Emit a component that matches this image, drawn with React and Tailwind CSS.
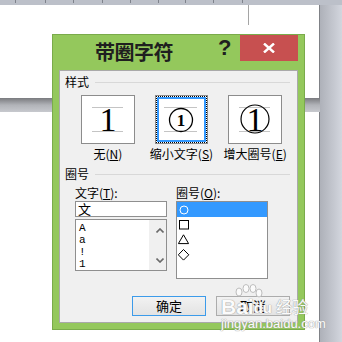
import React from 'react';

const ticks = [15, 45, 73, 102, 130, 158, 185, 213, 242];

const Ruler = () => (
  <svg width="342" height="5" className="block bg-[#bcc0c9]">
    {ticks.map((x) => (
      <line key={x} x1={x + 0.5} y1="0" x2={x + 0.5} y2="3" stroke="#7f838c" strokeWidth="1" />
    ))}
  </svg>
);

// glyph previews inside the three style boxes
const PlainOne = () => (
  <svg width="52" height="47">
    <line x1="10" y1="11.5" x2="41" y2="11.5" stroke="#c4c4c4" />
    <line x1="10" y1="35.5" x2="41" y2="35.5" stroke="#c4c4c4" />
    <text x="26" y="35" textAnchor="middle" fontFamily="Liberation Serif" fontSize="34" fill="#000">1</text>
  </svg>
);

const SmallCircled = () => (
  <svg width="45" height="41">
    <line x1="5" y1="8.5" x2="38" y2="8.5" stroke="#c4c4c4" />
    <line x1="5" y1="32.5" x2="38" y2="32.5" stroke="#c4c4c4" />
    <circle cx="22" cy="21" r="11.5" fill="none" stroke="#000" strokeWidth="1.3" />
    <text x="22" y="27" textAnchor="middle" fontFamily="Liberation Serif" fontSize="17" fontWeight="bold" fill="#000">1</text>
  </svg>
);

const BigCircled = () => (
  <svg width="52" height="47">
    <line x1="10" y1="11.5" x2="41" y2="11.5" stroke="#c4c4c4" />
    <line x1="10" y1="35.5" x2="41" y2="35.5" stroke="#c4c4c4" />
    <circle cx="26" cy="23" r="14" fill="none" stroke="#000" strokeWidth="1.2" />
    <text x="26" y="35" textAnchor="middle" fontFamily="Liberation Serif" fontSize="34" fill="#000">1</text>
  </svg>
);

const Box = ({ children }) => (
  <div className="w-[54px] h-[49px] border border-[#8c8c8c] bg-white">{children}</div>
);

const SectionHead = ({ label }) => (
  <div className="flex items-center">
    <span>{label}</span>
    <div className="flex-1 h-px ml-[6px] mr-[2px] bg-[#d8d8d8]" />
  </div>
);

const Chevron = ({ up }) => (
  <svg width="8" height="5">
    <polyline
      points={up ? '0.5,4.5 4,1 7.5,4.5' : '0.5,0.5 4,4 7.5,0.5'}
      fill="none"
      stroke="#6a6a6a"
      strokeWidth="1.6"
    />
  </svg>
);

const Dialog = () => (
  <div className="absolute left-[52px] top-[34px] w-[253px] h-[296px] border border-[#7aab4b] bg-[#94c85c]">
    {/* title bar */}
    <div className="flex h-[35px]">
      <div className="w-[165px] pl-[42px] pt-[6px] text-[20px] leading-[22px] font-bold text-[#1f1f1f] tracking-[-0.5px]">
        带圈字符
      </div>
      <div className="w-[22px] pt-[2px] font-['Liberation_Sans',sans-serif] text-[22px] leading-none font-bold text-[#1f1f1f]">
        ?
      </div>
      <div className="w-[58px] h-[26px] bg-[#c75050] flex items-center justify-center">
        <svg width="12" height="10">
          <line x1="1" y1="0.5" x2="11" y2="9.5" stroke="#fff" strokeWidth="2.4" />
          <line x1="11" y1="0.5" x2="1" y2="9.5" stroke="#fff" strokeWidth="2.4" />
        </svg>
      </div>
    </div>

    {/* content panel */}
    <div className="ml-[6px] w-[239px] h-[253px] border border-[#a9a9a9] bg-[#f0f0f0] px-[5px] pt-[4px] text-[12px] leading-[14px] text-black">
      <SectionHead label="样式" />

      <div className="flex mt-[6px] ml-[6px]">
        <div className="w-[75px] flex flex-col items-center">
          <Box>
            <PlainOne />
          </Box>
          <span className="mt-[3px]">
            无(<span className="underline">N</span>)
          </span>
        </div>
        <div className="w-[75px] flex flex-col items-center">
          <div className="w-[53px] h-[49px] border border-[#8c8c8c] bg-white">
            <div className="h-full border border-dotted border-black">
              <div className="h-full border-2 border-[#3399ff]">
                <SmallCircled />
              </div>
            </div>
          </div>
          <span className="mt-[3px]">
            缩小文字(<span className="underline">S</span>)
          </span>
        </div>
        <div className="w-[75px] flex flex-col items-center">
          <Box>
            <BigCircled />
          </Box>
          <span className="mt-[3px]">
            增大圈号(<span className="underline">E</span>)
          </span>
        </div>
      </div>

      <div className="mt-[6px]">
        <SectionHead label="圈号" />
      </div>

      <div className="flex mt-[5px] ml-[10px]">
        <div className="w-[92px] flex flex-col">
          <span>
            文字(<span className="underline">T</span>):
          </span>
          <div className="mt-px h-[16px] border border-[#8f8f8f] bg-white pl-[2px] text-[13px] leading-[14px]">
            文
          </div>
          <div className="mt-[2px] h-[52px] border border-[#8f8f8f] bg-white flex">
            <div className="w-[73px] pl-[3px] pt-[2px] font-['Liberation_Mono',monospace] text-[11px] leading-[12px]">
              <div>A</div>
              <div>a</div>
              <div>!</div>
              <div>1</div>
            </div>
            <div className="flex-1 bg-[#f0f0f0] flex flex-col items-center justify-between pt-[8px] pb-[7px] pl-[4px]">
              <Chevron up />
              <Chevron />
            </div>
          </div>
        </div>

        <div className="w-[92px] ml-[9px] flex flex-col">
          <span>
            圈号(<span className="underline">O</span>):
          </span>
          <div className="mt-px h-[78px] border border-[#8f8f8f] bg-white">
            <div className="h-[15px] bg-[#3399ff] flex items-center pl-[2px]">
              <svg width="10" height="10">
                <circle cx="5" cy="5" r="4" fill="none" stroke="#fff" strokeWidth="1" />
              </svg>
            </div>
            <div className="h-[15px] flex items-center pl-[2px]">
              <svg width="10" height="10">
                <rect x="0.5" y="0.5" width="9" height="8.5" fill="none" stroke="#000" strokeWidth="1" />
              </svg>
            </div>
            <div className="h-[15px] flex items-center pl-[1px]">
              <svg width="12" height="11">
                <polygon points="5.5,0.8 10.6,9.6 0.4,9.6" fill="none" stroke="#000" strokeWidth="1" />
              </svg>
            </div>
            <div className="h-[15px] flex items-center pl-[1px]">
              <svg width="12" height="12">
                <polygon points="5.5,0.5 10.8,5.8 5.5,11.1 0.3,5.8" fill="none" stroke="#000" strokeWidth="1" />
              </svg>
            </div>
          </div>
        </div>
      </div>

      <div className="flex justify-end gap-[10px] pr-[2px] mt-[17px]">
        <button className="w-[74px] h-[20px] border border-[#3c9bea] bg-linear-to-b from-[#f2f2f2] to-[#e3e3e3] text-[13px] leading-[16px] text-black">
          确定
        </button>
        <button className="w-[74px] h-[20px] border border-[#acacac] bg-linear-to-b from-[#f2f2f2] to-[#e3e3e3] text-[13px] leading-[16px] text-black">
          取消
        </button>
      </div>
    </div>
  </div>
);

// faint baidu jingyan watermark in the lower right corner
const Watermark = () => (
  <div className="absolute left-[221px] top-[284px] pointer-events-none text-[#fbfbfb] [text-shadow:0_0_1px_#9c9c9c,0_0_1px_#9c9c9c]">
    <svg width="30" height="14" className="ml-[12px] block">
      <ellipse cx="6" cy="8" rx="3" ry="4" fill="#fbfbfb" stroke="#bdbdbd" />
      <ellipse cx="13" cy="4.5" rx="3" ry="4" fill="#fbfbfb" stroke="#bdbdbd" />
      <ellipse cx="20" cy="4.5" rx="3" ry="4" fill="#fbfbfb" stroke="#bdbdbd" />
      <ellipse cx="26" cy="9" rx="3" ry="4" fill="#fbfbfb" stroke="#bdbdbd" />
    </svg>
    <div className="flex items-end font-['Liberation_Sans',sans-serif] font-bold text-[21px] leading-[17px]">
      <span>Bai</span>
      <span className="text-[15px] leading-[15px]">du</span>
      <span className="ml-[4px] font-['Noto_Sans_CJK_SC',sans-serif] font-normal text-[16px] leading-[17px]">经验</span>
    </div>
    <div className="font-['Liberation_Sans',sans-serif] text-[13px] leading-[14px] mt-[2px]">jingyan.baidu.com</div>
  </div>
);

export default function App() {
  return (
    <div className="relative w-[342px] h-[342px] overflow-hidden bg-[#cdd0d8] font-['Noto_Sans_CJK_SC',sans-serif]">
      <Ruler />
      <div className="flex">
        <div className="w-[320px] flex flex-col">
          <div className="h-[93px] bg-white border-r border-[#7f8186]">
            <div className="ml-[248px] w-px h-[20px] bg-[#a5a5a5]" />
          </div>
          <div className="h-[14px] bg-linear-to-b from-[#7a7b7f] via-[#b1b3b8] to-[#c7c9ce]" />
          <div className="h-[235px] bg-white border-r border-[#7f8186]" />
        </div>
        <div className="flex-1 h-[342px] bg-linear-to-r from-[#aeb1b9] to-[#d3d6de]" />
      </div>
      <Dialog />
      <Watermark />
    </div>
  );
}
